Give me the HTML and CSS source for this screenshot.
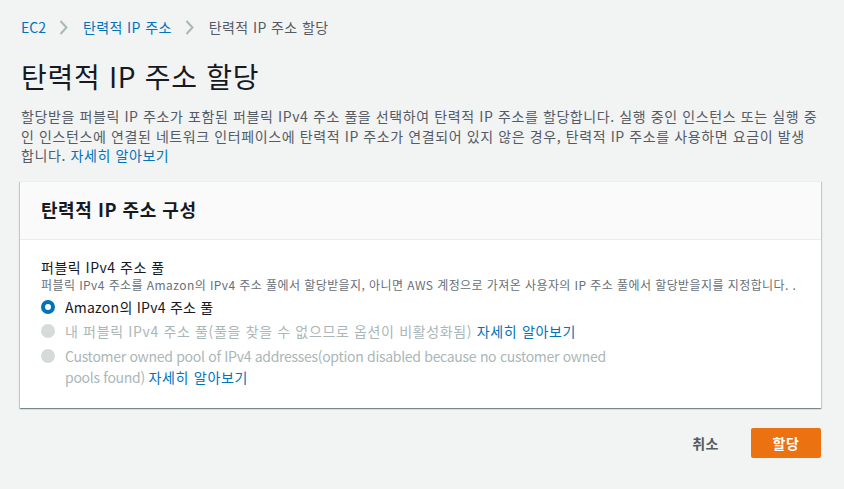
FILE: index.html
```html
<!DOCTYPE html>
<html lang="ko">
<head>
<meta charset="utf-8">
<link rel="stylesheet" href="styles.css">
</head>
<body>
<div class="page">
  <nav class="crumbs">
    <a class="crumb-link latin-crumb" href="#">EC2</a>
    <svg class="chev" viewBox="0 0 9 15" width="9" height="15"><path d="M1.5 1 L7.5 7.5 L1.5 14" fill="none" stroke="#aab7b8" stroke-width="2"/></svg>
    <a class="crumb-link" href="#">탄력적 IP 주소</a>
    <svg class="chev" viewBox="0 0 9 15" width="9" height="15"><path d="M1.5 1 L7.5 7.5 L1.5 14" fill="none" stroke="#aab7b8" stroke-width="2"/></svg>
    <span class="crumb-current">탄력적 IP 주소 할당</span>
  </nav>
  <h1 class="title">탄력적 IP 주소 할당</h1>
  <p class="intro">할당받을 퍼블릭 IP 주소가 포함된 퍼블릭 IPv4 주소 풀을 선택하여 탄력적 IP 주소를 할당합니다. 실행 중인 인스턴스 또는 실행 중<br>인 인스턴스에 연결된 네트워크 인터페이스에 탄력적 IP 주소가 연결되어 있지 않은 경우, 탄력적 IP 주소를 사용하면 요금이 발생<br>합니다. <a href="#" class="link">자세히 알아보기</a></p>

  <section class="card">
    <header class="card-head"><h2>탄력적 IP 주소 구성</h2></header>
    <div class="card-body">
      <div class="field-label">퍼블릭 IPv4 주소 풀</div>
      <div class="field-desc">퍼블릭 IPv4 주소를 Amazon의 IPv4 주소 풀에서 할당받을지, 아니면 AWS 계정으로 가져온 사용자의 IP 주소 풀에서 할당받을지를 지정합니다. .</div>
      <div class="radio-row first">
        <span class="radio checked"></span>
        <span class="radio-text">Amazon의 IPv4 주소 풀</span>
      </div>
      <div class="radio-row disabled">
        <span class="radio"></span>
        <span class="radio-text">내 퍼블릭 IPv4 주소 풀(풀을 찾을 수 없으므로 옵션이 비활성화됨) <a href="#" class="link">자세히 알아보기</a></span>
      </div>
      <div class="radio-row disabled last">
        <span class="radio"></span>
        <span class="radio-text latin">Customer owned pool of IPv4 addresses(option disabled because no customer owned pools found) <a href="#" class="link ko">자세히 알아보기</a></span>
      </div>
    </div>
  </section>

  <div class="actions">
    <button class="btn-cancel">취소</button>
    <button class="btn-primary">할당</button>
  </div>
</div>
</body>
</html>
```

FILE: styles.css
```css
* { box-sizing: border-box; }
html, body { margin: 0; padding: 0; }
body {
  background: #f2f3f3;
  font-family: "Noto Sans CJK KR", "Open Sans", sans-serif;
  color: #16191f;
  font-size: 14px;
  letter-spacing: 0.5px;
}
.page {
  padding: 16px 23px 0 21px;
}
.crumbs {
  display: flex;
  align-items: center;
  gap: 13px;
  height: 22px;
  font-size: 14px;
  letter-spacing: 0.4px;
}
.crumb-link { color: #0073bb; text-decoration: none; }
.latin-crumb { letter-spacing: 0; }
.crumb-current { color: #545b64; }
.chev { display: block; margin-right: 2px; }
.title {
  margin: 20px 0 0;
  font-size: 28px;
  font-weight: 400;
  line-height: 36px;
  letter-spacing: 0.7px;
  color: #16191f;
}
.intro {
  margin: 13px 0 0;
  font-size: 14px;
  line-height: 19.5px;
  letter-spacing: 0.6px;
  white-space: nowrap;
  color: #545b64;
}
.link { color: #0073bb; text-decoration: none; }
.card {
  margin: 15px 0 0 -1px;
  background: #fff;
  border-top: 1px solid #eaeded;
  box-shadow: 0 1px 1px 0 rgba(0,28,36,.3), 1px 1px 1px 0 rgba(0,28,36,.15), -1px 1px 1px 0 rgba(0,28,36,.15);
}
.card-head {
  background: #fafafa;
  border-bottom: 1px solid #eaeded;
  padding: 0 21px;
  height: 58px;
  display: flex;
  align-items: center;
}
.card-head h2 {
  margin: 0 0 2px;
  font-size: 18px;
  font-weight: 700;
  letter-spacing: 0.55px;
  color: #16191f;
}
.card-body {
  padding: 17px 21px 20px;
}
.field-label {
  font-size: 14px;
  line-height: 20px;
  color: #16191f;
}
.field-desc {
  font-size: 12px;
  line-height: 16px;
  letter-spacing: 0.42px;
  color: #687078;
}
.radio-row {
  display: flex;
  align-items: flex-start;
  gap: 10px;
  margin-top: 3px;
  font-size: 14px;
  line-height: 21px;
  letter-spacing: 0.65px;
}
.radio-row.first { margin-top: 4px; letter-spacing: 0.25px; }
.radio-row.last { margin-top: 4px; }
.radio {
  flex: none;
  width: 14px;
  height: 14px;
  margin-top: 3px;
  border-radius: 50%;
  background: #d5dbdb;
}
.radio.checked {
  background: #fff;
  border: 4px solid #0073bb;
}
.radio-text { color: #16191f; }
.disabled .radio-text { color: #aab7b8; }
.radio-text.latin { max-width: 560px; letter-spacing: -0.3px; }
.radio-text .ko { display: inline-block; letter-spacing: 0.7px; line-height: 21px; }
.actions {
  display: flex;
  justify-content: flex-end;
  align-items: center;
  gap: 22px;
  margin-top: 20px;
}
.btn-cancel {
  border: 0;
  background: none;
  font: 700 14px "Noto Sans CJK KR", "Open Sans", sans-serif;
  letter-spacing: 0.5px;
  color: #545b64;
  padding: 4px 10px;
}
.btn-primary {
  width: 70px;
  height: 30px;
  border: 0;
  border-radius: 2px;
  background: #ec7211;
  color: #fff;
  letter-spacing: 0.5px;
  font: 700 14px "Noto Sans CJK KR", "Open Sans", sans-serif;
}
```
